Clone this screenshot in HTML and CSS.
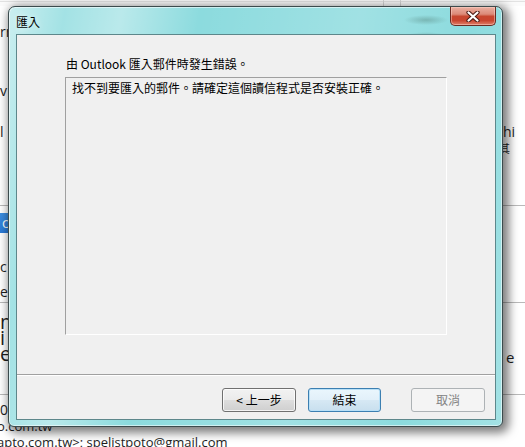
FILE: index.html
```html
<!DOCTYPE html>
<html lang="zh-Hant">
<head>
<meta charset="utf-8">
<title>匯入</title>
<link rel="stylesheet" href="styles.css">
</head>
<body>
<div class="bg">
  <div class="topbar"></div>
  <div class="sp h18"></div>
  <div class="row"><span class="l">rr</span></div>
  <div class="sp h43"></div>
  <div class="row"><span class="l">v</span></div>
  <div class="sp h25"></div>
  <div class="row"><span class="l">l</span><span class="r">hi</span></div>
  <div class="row"><span class="l"></span><span class="r cjk">其</span></div>
  <div class="sp h49"></div>
  <div class="rule"></div>
  <div class="sp h7"></div>
  <div class="row"><span class="sel">c</span></div>
  <div class="sp h26"></div>
  <div class="row"><span class="l">c</span></div>
  <div class="sp h9"></div>
  <div class="row"><span class="l">e</span></div>
  <div class="sp h2"></div>
  <div class="rule"></div>
  <div class="sp h11"></div>
  <div class="row big"><span class="l">m</span></div>
  <div class="row big"><span class="l">i</span></div>
  <div class="row big"><span class="l">e</span><span class="r small">e</span></div>
  <div class="sp h32"></div>
  <div class="rule"></div>
  <div class="sp h7"></div>
  <div class="row"><span class="l">0g</span></div>
  <div class="row"><span class="l shift">o.com.tw</span></div>
  <div class="row"><span class="l shift">apto.com.tw&gt;; spelistpoto@gmail.com</span></div>
</div>

<div class="window">
  <div class="titlebar"><span class="title">匯入</span></div>
  <button class="close" aria-label="關閉">
    <svg width="14" height="11" viewBox="0 0 14 11">
      <path d="M2.5 1.5 L11.5 9.5 M11.5 1.5 L2.5 9.5" stroke="#4a1a14" stroke-width="4.2" stroke-linecap="round" fill="none"/>
      <path d="M2.5 1.5 L11.5 9.5 M11.5 1.5 L2.5 9.5" stroke="#ffffff" stroke-width="2.2" stroke-linecap="round" fill="none"/>
    </svg>
  </button>
  <div class="client">
    <p class="msg">由 Outlook 匯入郵件時發生錯誤。</p>
    <div class="textbox">找不到要匯入的郵件。請確定這個讀信程式是否安裝正確。</div>
    <div class="sep"></div>
    <div class="buttons">
      <button class="btn back">&lt; 上一步</button>
      <button class="btn default">結束</button>
      <button class="btn disabled">取消</button>
    </div>
  </div>
</div>
</body>
</html>
```

FILE: styles.css
```css
html, body {
  margin: 0;
  padding: 0;
}
body {
  width: 525px;
  height: 447px;
  overflow: hidden;
  position: relative;
  background: #ffffff;
  font-family: "Open Sans", "Noto Sans", sans-serif;
}

/* background page behind the dialog */
.bg {
  display: flex;
  flex-direction: column;
}
.topbar {
  height: 6px;
  background:
    linear-gradient(to right, transparent 383px, #d4d4d4 383px, #d4d4d4 384px, transparent 384px, transparent 400px, #d4d4d4 400px, #d4d4d4 401px, transparent 401px),
    linear-gradient(to bottom, #f7f7f7 0, #f7f7f7 1px, #e2e2e2 1px, #e2e2e2 2px, #fbfbfb 2px);
}
.sp { flex: none; }
.h2 { height: 2px; }
.h7 { height: 7px; }
.h9 { height: 9px; }
.h11 { height: 11px; }
.h18 { height: 18px; }
.h25 { height: 25px; }
.h26 { height: 26px; }
.h32 { height: 32px; }
.h43 { height: 43px; }
.h49 { height: 49px; }
.rule {
  height: 1px;
  background: #b9b9b9;
  flex: none;
}
.row {
  flex: none;
  display: flex;
  height: 16px;
  line-height: 16px;
  font-size: 14px;
  color: #1e1e1e;
  white-space: nowrap;
}
.row .l {
  flex: 1;
}
.row .l.shift {
  margin-left: -3px;
  font-size: 13px;
}
.row .r {
  width: 22px;
  flex: none;
}
.row .r.cjk {
  font-family: "Noto Sans CJK TC", sans-serif;
  font-size: 11px;
  margin-left: -4px;
  width: 26px;
}
.row .r.small {
  font-size: 15px;
  padding-left: 3px;
  width: 19px;
  line-height: 22px;
}
.row .sel {
  width: 40px;
  height: 20px;
  line-height: 20px;
  padding-left: 2px;
  background: linear-gradient(#3d8ee0, #2a7ad6);
  color: #ffffff;
}
.row:has(.sel) {
  height: 20px;
}
.row.big {
  font-size: 20px;
}

/* dialog window */
.window {
  position: absolute;
  left: 8px;
  top: 6px;
  width: 495px;
  height: 421px;
  box-sizing: border-box;
  border: 1px solid #3c4b4d;
  border-radius: 7px 7px 6px 6px;
  padding: 0 6px 6px 7px;
  display: flex;
  flex-direction: column;
  background:
    radial-gradient(ellipse 22px 5px at 417px 13px, rgba(70, 110, 100, 0.35), transparent),
    radial-gradient(ellipse 20px 4px at 417px 29px, rgba(70, 110, 100, 0.3), transparent),
    linear-gradient(100deg, rgba(255,255,255,0.55) 0%, rgba(255,255,255,0.2) 10%, rgba(255,255,255,0.4) 20%, rgba(255,255,255,0) 34%, rgba(255,255,255,0.18) 62%, rgba(255,255,255,0) 82%, rgba(255,255,255,0.2) 100%),
    #8cdbde;
  box-shadow: 3px 3px 10px 3px rgba(0, 0, 0, 0.5), inset 0 0 0 1px rgba(255, 255, 255, 0.55);
  font-family: "Noto Sans CJK TC", "Noto Sans", sans-serif;
  font-size: 12px;
  color: #000000;
}
.titlebar {
  height: 27px;
  box-sizing: border-box;
  padding-top: 7px;
  line-height: 16px;
  flex: none;
}
.title {
  text-shadow: 0 0 6px rgba(255, 255, 255, 0.9);
}
.close {
  position: absolute;
  top: 0;
  right: 6px;
  width: 46px;
  height: 19px;
  box-sizing: border-box;
  margin: 0;
  padding: 0;
  border: 1px solid #6a2b22;
  border-top: none;
  border-radius: 0 0 5px 5px;
  background: linear-gradient(#eab0a2 0%, #dc8a78 40%, #c7472f 52%, #c9452f 75%, #e0806a 100%);
  box-shadow: inset 0 0 0 1px rgba(255, 220, 210, 0.45);
  display: flex;
  align-items: center;
  justify-content: center;
}
.client {
  flex: 1;
  box-sizing: border-box;
  border: 1px solid #5d878b;
  background: #f0f0f0;
  display: flex;
  flex-direction: column;
  padding-top: 21px;
}
.msg {
  margin: 0 0 0 49px;
  line-height: 16px;
}
.textbox {
  margin: 5px 0 0 48px;
  width: 382px;
  height: 258px;
  box-sizing: border-box;
  border-top: 1px solid #a0a0a0;
  border-left: 1px solid #a0a0a0;
  border-right: 1px solid #ffffff;
  border-bottom: 1px solid #ffffff;
  padding: 2px 6px;
  line-height: 16px;
}
.sep {
  margin-top: 39px;
  border-top: 1px solid #a0a0a0;
  border-bottom: 1px solid #ffffff;
}
.buttons {
  display: flex;
  justify-content: flex-end;
  padding: 12px 10px 0 0;
}
.btn {
  width: 74px;
  height: 24px;
  box-sizing: border-box;
  margin: 0;
  padding: 0;
  border: 1px solid #707070;
  border-radius: 3px;
  background: linear-gradient(#f2f2f2 0%, #ebebeb 48%, #dddddd 52%, #cfcfcf 100%);
  box-shadow: inset 0 0 0 1px rgba(255, 255, 255, 0.75);
  font-family: "Noto Sans CJK TC", "Noto Sans", sans-serif;
  font-size: 12px;
  color: #000000;
  line-height: 20px;
}
.btn.default {
  width: 73px;
  margin-left: 12px;
  border-color: #3c7fb1;
  background: linear-gradient(#eaf6fd 0%, #e2f0f9 48%, #d6e8f4 52%, #c8dfee 100%);
  box-shadow: inset 0 0 0 1px #b8e0f7;
}
.btn.disabled {
  margin-left: 30px;
  border-color: #adb2b5;
  background: #f4f4f4;
  box-shadow: none;
  color: #838383;
}
```
